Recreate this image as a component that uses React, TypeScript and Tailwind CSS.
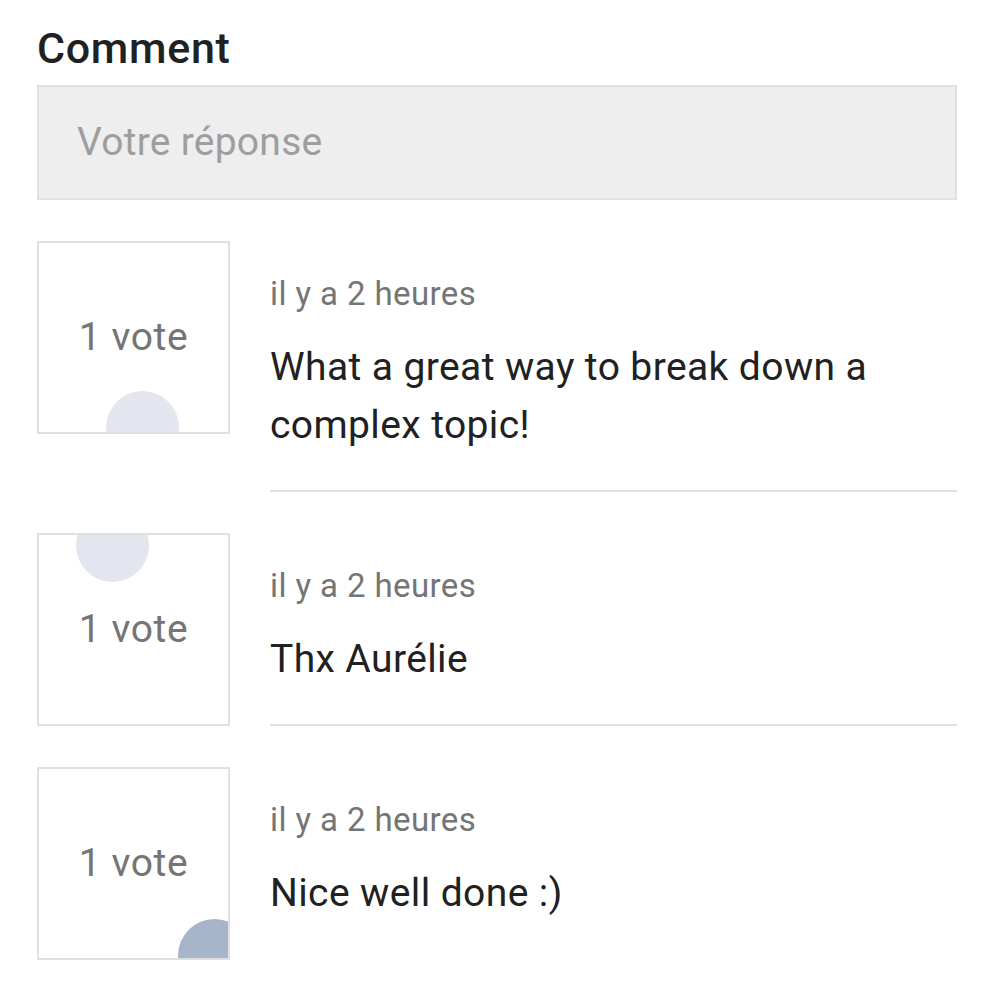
import React from "react";

type Item = { text: string; circle: "bottom" | "top" | "corner" };

const items: Item[] = [
  { text: "What a great way to break down a complex topic!", circle: "bottom" },
  { text: "Thx Aurélie", circle: "top" },
  { text: "Nice well done :)", circle: "corner" },
];

function VoteBox({ circle }: { circle: Item["circle"] }) {
  return (
    <div className="relative w-[193px] h-[193px] shrink-0 border-2 border-[#e0e0e0] overflow-hidden flex items-center justify-center bg-white">
      {circle === "bottom" && (
        <div className="absolute w-[73px] h-[73px] rounded-full bg-[#e3e6ee] left-[67px] top-[148px]" />
      )}
      {circle === "top" && (
        <div className="absolute w-[73px] h-[73px] rounded-full bg-[#e3e6ee] left-[37px] top-[-26px]" />
      )}
      {circle === "corner" && (
        <div className="absolute w-[73px] h-[73px] rounded-full bg-[#a6b5c9] left-[139px] top-[150px]" />
      )}
      <span className="relative text-[39px] tracking-[0.6px] text-[#757575] leading-none">1 vote</span>
    </div>
  );
}

export default function App() {
  return (
    <div
      className="min-h-[993px] bg-white px-[37px] pt-[23px] pr-[43px]"
      style={{ fontFamily: "Roboto, 'Noto Sans', sans-serif" }}
    >
      <h1 className="text-[43px] tracking-[0.7px] leading-[50px] font-medium text-[#212121]">Comment</h1>
      <div className="mt-[12px] h-[115px] border-2 border-[#e0e0e0] bg-[#eeeeee] flex items-center pl-[38px]">
        <span className="text-[39px] tracking-[0.25px] text-[#9e9e9e]">Votre réponse</span>
      </div>
      <div className="mt-[41px] flex flex-col gap-[41px]">
        {items.map((it, i) => (
          <div key={i} className="flex gap-[40px] items-start">
            <VoteBox circle={it.circle} />
            <div
              className={
                "flex-1 pt-[33px] pb-[36px] " + (i < items.length - 1 ? "border-b-2 border-[#e0e0e0]" : "")
              }
            >
              <div className="text-[33px] tracking-[0.4px] leading-[40px] text-[#757575]">il y a 2 heures</div>
              <div className="mt-[24px] text-[39px] tracking-[0.4px] leading-[58px] text-[#212121] pr-[40px]">{it.text}</div>
            </div>
          </div>
        ))}
      </div>
    </div>
  );
}
